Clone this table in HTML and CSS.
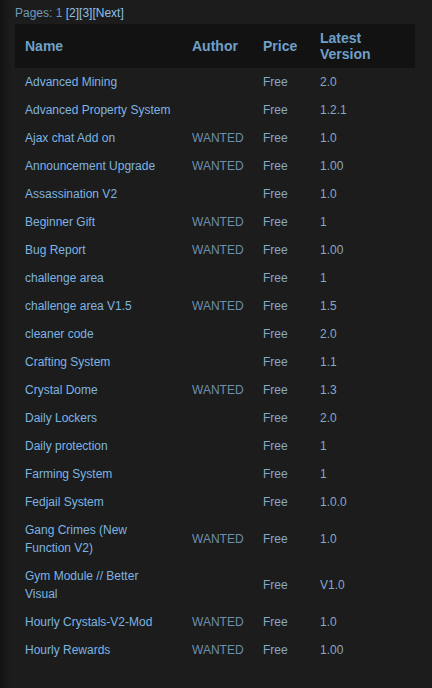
FILE: index.html
```html
<!DOCTYPE html>
<html>
<head>
<meta charset="utf-8">
<link rel="stylesheet" href="styles.css">
</head>
<body>
<div class="page">
  <div class="pager">Pages: 1 <a href="#">[2]</a><a href="#">[3]</a><a href="#">[Next]</a></div>
  <table class="mods">
    <colgroup>
      <col class="c-name"><col class="c-author"><col class="c-price"><col class="c-ver">
    </colgroup>
    <thead>
      <tr><th>Name</th><th>Author</th><th>Price</th><th>Latest Version</th></tr>
    </thead>
    <tbody>
      <tr><td class="name">Advanced Mining</td><td class="author"></td><td>Free</td><td>2.0</td></tr>
      <tr><td class="name">Advanced Property System</td><td class="author"></td><td>Free</td><td>1.2.1</td></tr>
      <tr><td class="name">Ajax chat Add on</td><td class="author">WANTED</td><td>Free</td><td>1.0</td></tr>
      <tr><td class="name">Announcement Upgrade</td><td class="author">WANTED</td><td>Free</td><td>1.00</td></tr>
      <tr><td class="name">Assassination V2</td><td class="author"></td><td>Free</td><td>1.0</td></tr>
      <tr><td class="name">Beginner Gift</td><td class="author">WANTED</td><td>Free</td><td>1</td></tr>
      <tr><td class="name">Bug Report</td><td class="author">WANTED</td><td>Free</td><td>1.00</td></tr>
      <tr><td class="name">challenge area</td><td class="author"></td><td>Free</td><td>1</td></tr>
      <tr><td class="name">challenge area V1.5</td><td class="author">WANTED</td><td>Free</td><td>1.5</td></tr>
      <tr><td class="name">cleaner code</td><td class="author"></td><td>Free</td><td>2.0</td></tr>
      <tr><td class="name">Crafting System</td><td class="author"></td><td>Free</td><td>1.1</td></tr>
      <tr><td class="name">Crystal Dome</td><td class="author">WANTED</td><td>Free</td><td>1.3</td></tr>
      <tr><td class="name">Daily Lockers</td><td class="author"></td><td>Free</td><td>2.0</td></tr>
      <tr><td class="name">Daily protection</td><td class="author"></td><td>Free</td><td>1</td></tr>
      <tr><td class="name">Farming System</td><td class="author"></td><td>Free</td><td>1</td></tr>
      <tr><td class="name">Fedjail System</td><td class="author"></td><td>Free</td><td>1.0.0</td></tr>
      <tr><td class="name">Gang Crimes (New Function V2)</td><td class="author">WANTED</td><td>Free</td><td>1.0</td></tr>
      <tr><td class="name">Gym Module // Better Visual</td><td class="author"></td><td>Free</td><td>V1.0</td></tr>
      <tr><td class="name">Hourly Crystals-V2-Mod</td><td class="author">WANTED</td><td>Free</td><td>1.0</td></tr>
      <tr><td class="name">Hourly Rewards</td><td class="author">WANTED</td><td>Free</td><td>1.00</td></tr>
    </tbody>
  </table>
</div>
</body>
</html>
```
FILE: styles.css
```css
html, body {
  margin: 0;
  padding: 0;
  height: 100%;
}
body {
  background: linear-gradient(to right, #131313 0px, #1a1a1a 8px, #1c1c1c 12px);
  font-family: "Liberation Sans", Arial, sans-serif;
  font-size: 12px;
  color: #7eaed4;
}
.page {
  padding: 6px 17px 0 15px;
}
.pager {
  line-height: 14px;
  height: 14px;
  margin-bottom: 4px;
  color: #6f9ab9;
}
.pager a {
  color: #8cc0ea;
  text-decoration: none;
}
.mods {
  width: 400px;
  border-collapse: collapse;
  table-layout: fixed;
}
.c-name { width: 167px; }
.c-author { width: 71px; }
.c-price { width: 57px; }
.c-ver { width: 105px; }
.mods thead th {
  background: #121212;
  color: #6fa0c8;
  font-weight: bold;
  font-size: 14px;
  line-height: 16px;
  text-align: left;
  padding: 6px 10px;
  height: 32px;
  vertical-align: middle;
}
.mods td {
  padding: 5px 10px;
  line-height: 18px;
  vertical-align: middle;
  color: #86a9c6;
}
.mods td.name {
  color: #7db4e2;
}
.mods td.author {
  color: #6a90b0;
}
```
